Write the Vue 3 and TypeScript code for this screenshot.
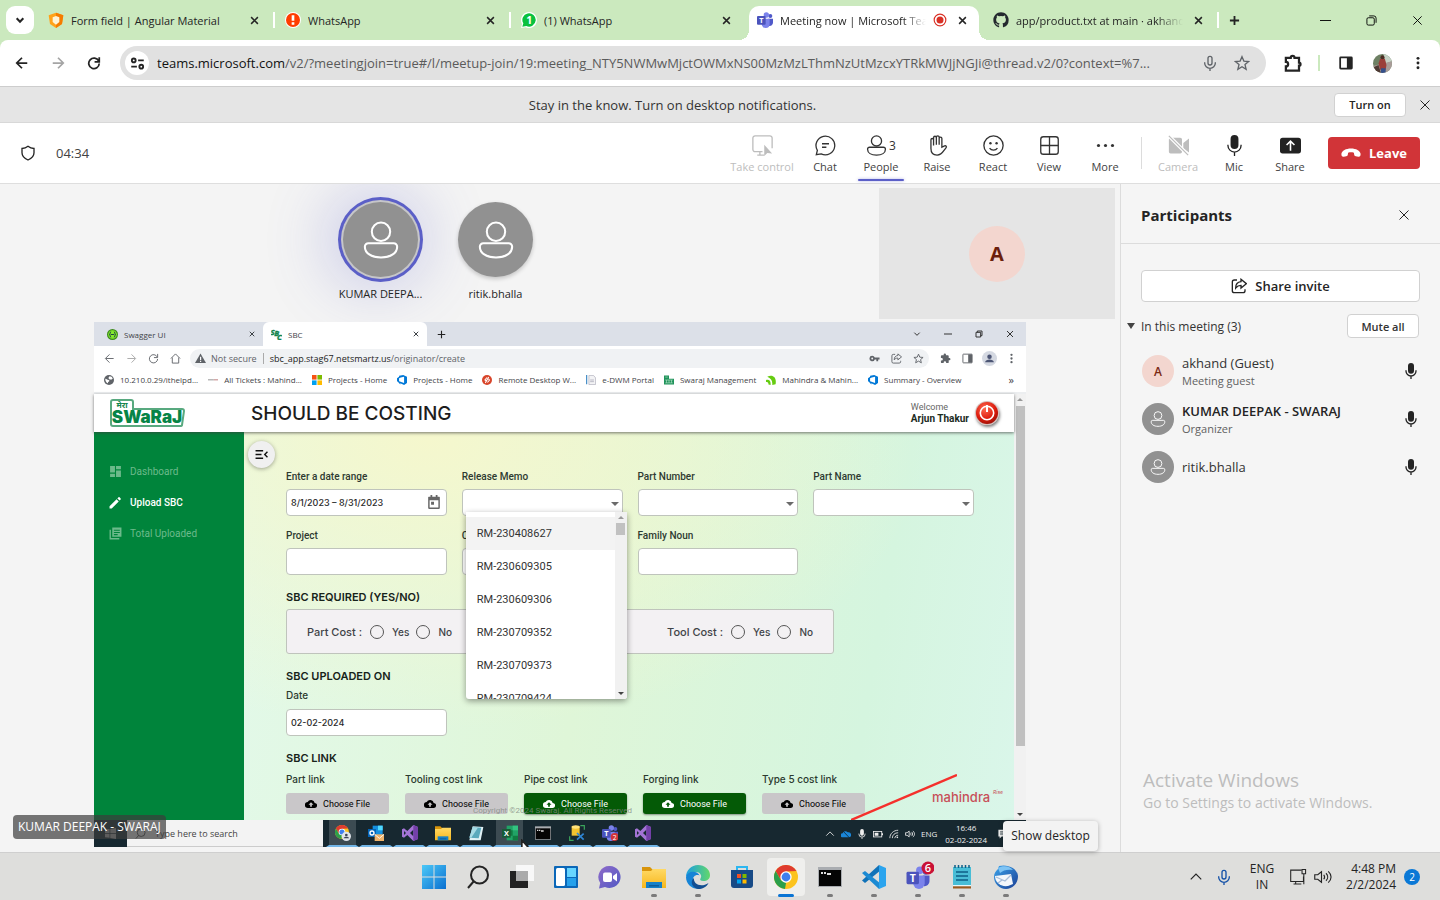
<script setup lang="ts">
import { ref } from 'vue'

interface Tab { icon: string; title: string; active?: boolean; faded?: boolean }
interface Tool { icon: string; label: string; disabled?: boolean; active?: boolean; count?: number }
interface Person { name: string; role?: string; initial?: string; strong?: boolean }

const tabs: Tab[] = [
  { icon: 'angular', title: 'Form field | Angular Material' },
  { icon: 'alert', title: 'WhatsApp' },
  { icon: 'whatsapp', title: '(1) WhatsApp' },
  { icon: 'teams', title: 'Meeting now | Microsoft Teams', active: true, faded: true },
  { icon: 'github', title: 'app/product.txt at main · akhand', faded: true },
]

const meetingTools: Tool[] = [
  { icon: 'control', label: 'Take control', disabled: true },
  { icon: 'chat', label: 'Chat' },
  { icon: 'person', label: 'People', active: true, count: 3 },
  { icon: 'hand', label: 'Raise' },
  { icon: 'smile', label: 'React' },
  { icon: 'grid', label: 'View' },
  { icon: 'more', label: 'More' },
]
const deviceTools: Tool[] = [
  { icon: 'camera-off', label: 'Camera', disabled: true },
  { icon: 'mic-fill', label: 'Mic' },
  { icon: 'share-box', label: 'Share' },
]

const people: Person[] = [
  { name: 'akhand (Guest)', role: 'Meeting guest', initial: 'A' },
  { name: 'KUMAR DEEPAK - SWARAJ', role: 'Organizer', strong: true },
  { name: 'ritik.bhalla' },
]

const bookmarks = [
  { icon: 'globe', title: '10.210.0.29/ithelpd...' },
  { icon: 'dash', title: 'All Tickets : Mahind...' },
  { icon: 'microsoft', title: 'Projects - Home' },
  { icon: 'devops', title: 'Projects - Home' },
  { icon: 'remote', title: 'Remote Desktop W...' },
  { icon: 'doc', title: 'e-DWM Portal' },
  { icon: 'swaraj-mini', title: 'Swaraj Management' },
  { icon: 'leaf', title: 'Mahindra & Mahin...' },
  { icon: 'devops', title: 'Summary - Overview' },
]

const sideItems = [
  { icon: 'dashboard', title: 'Dashboard', active: false },
  { icon: 'pencil', title: 'Upload SBC', active: true },
  { icon: 'library', title: 'Total Uploaded', active: false },
]

const memos = ['RM-230408627', 'RM-230609305', 'RM-230609306', 'RM-230709352', 'RM-230709373', 'RM-230709424']
const links = [
  { title: 'Part link', ready: false },
  { title: 'Tooling cost link', ready: false },
  { title: 'Pipe cost link', ready: true },
  { title: 'Forging link', ready: true },
  { title: 'Type 5 cost link', ready: false },
]

const remoteApps = ['chrome-user', 'outlook', 'vs', 'folder', 'note-blue', 'excel', 'terminal', 'dbtool', 'teams-2', 'vs']
const apps = [
  { icon: 'windows', name: 'Start', open: false },
  { icon: 'search', name: 'Search', open: false },
  { icon: 'taskview', name: 'Task view', open: false },
  { icon: 'widgets', name: 'Widgets', open: false },
  { icon: 'meet', name: 'Chat', open: false },
  { icon: 'folder', name: 'File Explorer', open: true },
  { icon: 'edge', name: 'Edge', open: true },
  { icon: 'store', name: 'Store', open: false },
  { icon: 'chrome', name: 'Chrome', open: true },
  { icon: 'terminal', name: 'Command Prompt', open: true },
  { icon: 'vscode', name: 'Code', open: true },
  { icon: 'teams-6', name: 'Teams', open: true },
  { icon: 'notepad', name: 'Notepad', open: true },
  { icon: 'thunderbird', name: 'Thunderbird', open: true },
]

const dateRange = ref('8/1/2023 – 8/31/2023')
const uploadedOn = ref('02-02-2024')
const costs = ['Part Cost :', 'Tool Cost :']
</script>

<template>
  <div class="desktop">
    <svg class="paints" aria-hidden="true">
      <defs>
        <linearGradient id="gWin" x1="0" y1="0" x2="1" y2="1"><stop offset="0" stop-color="#4cc9f8" /><stop offset="1" stop-color="#0a6fd0" /></linearGradient>
        <linearGradient id="gEdge" x1="0" y1="0" x2="1" y2="0"><stop offset="0" stop-color="#1b9de2" /><stop offset="1" stop-color="#62d86a" /></linearGradient>
        <linearGradient id="gMeet" x1="0" y1="0" x2="1" y2="1"><stop offset="0" stop-color="#8f6bc9" /><stop offset="1" stop-color="#5159c4" /></linearGradient>
        <linearGradient id="gFold" x1="0" y1="0" x2="0" y2="1"><stop offset="0" stop-color="#ffd965" /><stop offset="1" stop-color="#f7b71d" /></linearGradient>
        <radialGradient id="gPower" cx=".4" cy=".3" r=".8"><stop offset="0" stop-color="#ff6b52" /><stop offset=".6" stop-color="#dd1b0c" /><stop offset="1" stop-color="#8c0d06" /></radialGradient>
        <linearGradient id="gBird" x1="0" y1="0" x2="1" y2="1"><stop offset="0" stop-color="#3ba4ec" /><stop offset="1" stop-color="#1c3f94" /></linearGradient>
        <clipPath id="faceClip"><circle cx="12" cy="12" r="12" /></clipPath>
      </defs>
    </svg>
    <svg class="sprite" aria-hidden="true">
      <symbol id="chev-down" viewBox="0 0 24 24"><path class="s" d="M4 8l8 8 8-8" /></symbol>
      <symbol id="chev-up" viewBox="0 0 24 24"><path class="s" d="M3 16l9-9 9 9" /></symbol>
      <symbol id="x" viewBox="0 0 24 24"><path class="s" d="M3 3l18 18M21 3L3 21" /></symbol>
      <symbol id="plus" viewBox="0 0 24 24"><path class="s" d="M12 2v20M2 12h20" /></symbol>
      <symbol id="minus" viewBox="0 0 24 24"><path class="s" d="M0 12h24" /></symbol>
      <symbol id="restore" viewBox="0 0 24 24"><rect class="s" x="2" y="6" width="16" height="16" rx="3" /><path class="s" d="M7 2h10a5 5 0 0 1 5 5v10" /></symbol>
      <symbol id="restore-sq" viewBox="0 0 24 24"><path class="s" d="M3 7h14v14H3zM7 7V3h14v14h-4" /></symbol>
      <symbol id="left" viewBox="0 0 24 24"><path class="s" d="M21 12H4M12 3l-9 9 9 9" /></symbol>
      <symbol id="right" viewBox="0 0 24 24"><path class="s" d="M3 12h17M12 3l9 9-9 9" /></symbol>
      <symbol id="reload" viewBox="0 0 24 24"><path class="s" d="M20 8.500A9 9 0 1 0 21 13M21 2v8h-8" /></symbol>
      <symbol id="home" viewBox="0 0 24 24"><path class="s" d="M2 12L12 2l10 10M5 10v12h14V10" /></symbol>
      <symbol id="tune" viewBox="0 0 24 24"><g class="s"><circle cx="6" cy="7" r="3" /><path d="M13 7h9M2 17h9" /><circle cx="18" cy="17" r="3" /></g></symbol>
      <symbol id="mic" viewBox="0 0 24 24"><path class="s" d="M9 5a3 3 0 0 1 6 0v7a3 3 0 0 1-6 0zM4 11v1a8 8 0 0 0 16 0v-1M12 20v4" /></symbol>
      <symbol id="star" viewBox="0 0 24 24"><path class="s" d="M12 2.500l2.800 6.600 7.200.6-5.500 4.700 1.700 7-6.200-3.700-6.200 3.700 1.700-7L2 9.700l7.200-.6z" /></symbol>
      <symbol id="puzzle" viewBox="0 0 24 24"><path class="s" d="M2.500 5h6.500a2.500 2.500 0 0 1 5 0h6v6.500a2 2 0 0 1 0 4V22H2.500v-5.500a3 3 0 0 0 0-6z" /></symbol>
      <symbol id="puzzle-fill" viewBox="0 0 24 24"><path d="M20 11h-1V7a2 2 0 0 0-2-2h-4V3.500a2.500 2.500 0 0 0-5 0V5H4a2 2 0 0 0-2 2v4h1.500a2.700 2.700 0 0 1 0 5.400H2V20a2 2 0 0 0 2 2h4v-1.500a2.700 2.700 0 0 1 5.400 0V22H17a2 2 0 0 0 2-2v-4h1.500a2.500 2.500 0 0 0-.5-5z" /></symbol>
      <symbol id="panel" viewBox="0 0 24 24"><rect class="s" x="2" y="2.500" width="20" height="19" rx="1" /><path d="M13.500 3H22v18h-8.500z" /></symbol>
      <symbol id="vdots" viewBox="0 0 24 24"><circle cx="12" cy="4" r="2.500" /><circle cx="12" cy="12" r="2.500" /><circle cx="12" cy="20" r="2.500" /></symbol>
      <symbol id="more" viewBox="0 0 24 24"><circle cx="4" cy="12" r="1.800" /><circle cx="12" cy="12" r="1.800" /><circle cx="20" cy="12" r="1.800" /></symbol>
      <symbol id="angular" viewBox="0 0 24 24"><path fill="#ffa21a" d="M12 1l11 4-2 13-9 6-9-6L1 5z" /><path fill="#f57c00" d="M12 1l11 4-2 13-9 6z" /><path fill="#fff3d6" d="M7 8l5-2 5 2v7l-5 4-5-4z" /></symbol>
      <symbol id="alert" viewBox="0 0 24 24"><circle cx="12" cy="12" r="12" fill="#fff" /><circle cx="12" cy="12" r="10.500" fill="#ff3d00" /><path fill="#fff" d="M10 5h4v8h-4zM10 15.500h4V19h-4z" /></symbol>
      <symbol id="whatsapp" viewBox="0 0 24 24"><path fill="#fff" d="M0 24l1.500-6A12 12 0 1 1 7 23z" /><path fill="#0ac13e" d="M2 22l1.500-5A10 10 0 1 1 8 21z" /><text x="12.500" y="18" text-anchor="middle" font-size="16" font-weight="700" fill="#fff">1</text></symbol>
      <symbol id="teams" viewBox="0 0 24 24"><circle cx="20" cy="6" r="3" fill="#5059c9" /><circle cx="14" cy="4.500" r="4" fill="#7b83eb" /><path fill="#5059c9" d="M17 10h7v6a5 5 0 0 1-6 5z" /><path fill="#7b83eb" d="M7 10h12v8a6 6 0 0 1-12 0z" /><rect y="6" width="13" height="13" rx="1.500" fill="#4b53bc" /><text x="6.500" y="16.500" text-anchor="middle" font-size="11" font-weight="700" fill="#fff">T</text></symbol>
      <symbol id="github" viewBox="0 0 24 24"><path d="M12 .5C5.650.5.5 5.650.5 12c0 5.080 3.290 9.390 7.860 10.910.58.110.79-.25.79-.55v-2.120c-3.200.7-3.870-1.360-3.870-1.360-.52-1.330-1.280-1.680-1.280-1.680-1.050-.71.08-.7.08-.7 1.160.08 1.770 1.190 1.770 1.190 1.030 1.760 2.700 1.250 3.360.96.1-.75.4-1.250.73-1.540-2.550-.29-5.240-1.280-5.240-5.680 0-1.250.45-2.280 1.180-3.080-.12-.29-.51-1.460.11-3.040 0 0 .97-.31 3.160 1.180a10.900 10.900 0 0 1 5.760 0c2.200-1.490 3.160-1.180 3.160-1.180.63 1.580.24 2.750.12 3.040.74.8 1.180 1.830 1.180 3.080 0 4.410-2.690 5.380-5.250 5.670.41.36.78 1.060.78 2.130v3.160c0 .31.21.67.8.55A11.500 11.500 0 0 0 23.500 12C23.500 5.650 18.350.5 12 .5z" /></symbol>
      <symbol id="record" viewBox="0 0 24 24"><circle cx="12" cy="12" r="10" fill="none" stroke="#d93025" stroke-width="2" /><circle cx="12" cy="12" r="6" fill="#d93025" /></symbol>
      <symbol id="face" viewBox="0 0 24 24"><g clip-path="url(#faceClip)"><path fill="#6e8064" d="M0 0h24v24H0z" /><path fill="#c6d2c6" d="M13 0h11v9l-8 3z" /><path fill="#a99c98" d="M0 15l24-6v15H0z" /><path fill="#4d3a34" d="M0 17l7-3 3 10H0z" /><path fill="#9b3f3a" d="M9 6h6l2 8-1 6H9L7 12z" /><circle cx="12" cy="4" r="2.500" fill="#4a2c22" /><path fill="#34508a" d="M10 18h6v6h-6z" /></g></symbol>
      <symbol id="shield" viewBox="0 0 24 24"><path class="s" d="M12 2c3 2.500 6 3.300 9 3.300v6.200c0 5-3.500 8.500-9 11-5.500-2.500-9-6-9-11V5.300C6 5.300 9 4.500 12 2z" /></symbol>
      <symbol id="control" viewBox="0 0 24 24"><path class="s" d="M12 19H3.500A2.500 2.500 0 0 1 1 16.500v-13A2.500 2.500 0 0 1 3.500 1h17A2.500 2.500 0 0 1 23 3.500V15M9 19v4M6 23h8" /><path d="M14 11v13l3.500-3.500L23 21z" /></symbol>
      <symbol id="chat" viewBox="0 0 24 24"><path class="s" d="M1.500 22.500l1.200-5A10.700 10.700 0 1 1 7 21.500zM8 10h8M8 14h5" /></symbol>
      <symbol id="person" viewBox="0 0 24 24"><circle class="s" cx="12" cy="6.800" r="5.800" /><path class="s" d="M4 14h16a2.200 2.200 0 0 1 2.200 2.200c0 4-4 6.800-10.200 6.800S1.800 20.200 1.800 16.200A2.200 2.200 0 0 1 4 14z" /></symbol>
      <symbol id="hand" viewBox="0 0 24 24"><path class="s" d="M4.500 13V5.500a1.500 1.500 0 0 1 3 0V12 3a1.500 1.500 0 0 1 3.200 0V11 2.500a1.500 1.500 0 0 1 3.200 0V11 4a1.500 1.500 0 0 1 3.100 0v10l3-1.500c1.500-.8 3 .8 1.700 2.200C19 17.500 17.500 23 11.500 23c-5 0-7-3.500-7-7.500z" /></symbol>
      <symbol id="smile" viewBox="0 0 24 24"><circle class="s" cx="12" cy="12" r="11" /><circle cx="8.500" cy="9.500" r="1.400" /><circle cx="15.500" cy="9.500" r="1.400" /><path class="s" d="M7.500 15a5.500 5.500 0 0 0 9 0" /></symbol>
      <symbol id="grid" viewBox="0 0 24 24"><rect class="s" x="2" y="2" width="20" height="20" rx="3" /><path class="s" d="M12 2v20M2 12h20" /></symbol>
      <symbol id="camera-off" viewBox="0 0 24 24"><path d="M3 3h11a2 2 0 0 1 2 2v14a2 2 0 0 1-2 2H3a2 2 0 0 1-2-2V5a2 2 0 0 1 2-2zM17.500 9L24 4v16l-6.500-5z" /><path stroke="#fff" stroke-width="4" d="M1 1l22 22" /><path class="s" d="M1 1l22 22" /></symbol>
      <symbol id="mic-fill" viewBox="0 0 24 24"><rect x="7.500" y="0" width="9" height="16" rx="4.500" /><path class="s" d="M4.500 11v1a7.500 7.500 0 0 0 15 0v-1M12 20v4" /></symbol>
      <symbol id="share-box" viewBox="0 0 24 24"><rect x="0" y="3" width="24" height="18" rx="3" /><path fill="none" stroke="#fff" stroke-width="1.800" d="M12 18V7M7.500 11.500L12 7l4.500 4.500" /></symbol>
      <symbol id="phone" viewBox="0 0 24 24"><path d="M12 6.500c6 0 11 2.500 11.500 6.500.2 2.500-.8 3.800-2.800 3.500l-3-.6c-1.200-.3-1.700-1-1.900-2.200l-.3-2c-2.300-.7-4.700-.7-7 0l-.3 2c-.2 1.200-.7 1.900-1.900 2.200l-3 .6c-2 .3-3-1-2.800-3.500C1 9 6 6.500 12 6.500z" /></symbol>
      <symbol id="share-arrow" viewBox="0 0 24 24"><path class="s" d="M9 3H5a3 3 0 0 0-3 3v13a3 3 0 0 0 3 3h13a3 3 0 0 0 3-3v-2M15 2l8 6.500-8 6.500v-4c-4 0-6 1.500-8 4 0-6 3-9 8-9.500z" /></symbol>
      <symbol id="globe" viewBox="0 0 24 24"><circle cx="12" cy="12" r="12" fill="#5f6368" /><path fill="#fff" d="M3 9c4 0 5 3 8 3s2 4 0 4-1 4-2 4c-3-1-6-5-6-11zM13 3c4 0 7 2 8 6-2 0-3 3-5 2s-5-1-5-4 2-2 2-4z" /></symbol>
      <symbol id="dash" viewBox="0 0 24 24"><path fill="#aaa" d="M0 10h14v3H0z" /><path fill="#c99" d="M14 10h10v3H14z" /></symbol>
      <symbol id="microsoft" viewBox="0 0 24 24"><path fill="#f65314" d="M0 0h11v11H0z" /><path fill="#7cbb00" d="M13 0h11v11H13z" /><path fill="#00a1f1" d="M0 13h11v11H0z" /><path fill="#ffbb00" d="M13 13h11v11H13z" /></symbol>
      <symbol id="devops" viewBox="0 0 24 24"><path fill="#0078d7" fill-rule="evenodd" d="M0 8l5-4V2l10-2 9 4v15l-7 5-9-4v3l-6-7-2-1zM5 8v7l12 4V4L9 6z" /></symbol>
      <symbol id="remote" viewBox="0 0 24 24"><circle cx="12" cy="12" r="12" fill="#d8452a" /><path fill="none" stroke="#fff" stroke-width="2.500" d="M12 6l-5 6 4 4M14 8l4 4-5 6M16 5L8 19" /></symbol>
      <symbol id="doc" viewBox="0 0 24 24"><path fill="#4a90c8" d="M0 0h3v22H0z" /><path fill="#f3f3f5" stroke="#b9b9c4" d="M7 1h11l5 6v16H7z" /><path stroke="#99a" stroke-width="1.500" d="M10 12h9M10 16h9" /></symbol>
      <symbol id="swaraj-mini" viewBox="0 0 24 24"><path fill="#20935b" d="M0 1h12v8h12v14H0z" /><path stroke="#b7e3ca" stroke-width="1.500" d="M3 5h6M3 12h18M3 19h18M6 12v7M12 12v7M18 12v7" /></symbol>
      <symbol id="leaf" viewBox="0 0 24 24"><path fill="#6c1" d="M3 4C17-2 26 6 23 22l-8 2C16 13 12 8 3 4zM0 12c8-2 12 2 11 12l-5-1c0-5-2-6-6-6z" /></symbol>
      <symbol id="swagger" viewBox="0 0 24 24"><circle cx="12" cy="12" r="12" fill="#3d8a1c" /><circle cx="12" cy="12" r="9.500" fill="#85ea2d" /><path fill="none" stroke="#173647" stroke-width="2" d="M9 6c-3 0-1 5-4 6 3 1 1 6 4 6M15 6c3 0 1 5 4 6-3 1-1 6-4 6M8 12h8" /></symbol>
      <symbol id="sbc" viewBox="0 0 24 24"><g fill="#12854d" stroke="#12854d" stroke-width="1" font-weight="700" font-style="italic"><text x="-1" y="14" font-size="17">S</text><text x="7" y="16" font-size="17">B</text><text x="13" y="24" font-size="17">C</text></g></symbol>
      <symbol id="warn" viewBox="0 0 24 24"><path d="M12 1l12 21H0z" /><path fill="#fff" d="M11 8h2.500v7H11zM11 17h2.500v2.500H11z" /></symbol>
      <symbol id="key" viewBox="0 0 24 24"><path fill-rule="evenodd" d="M7 6a6 6 0 1 0 5.600 8H16v4h4v-4h3v-4H12.600A6 6 0 0 0 7 6zm0 4a2 2 0 1 1 0 4 2 2 0 0 1 0-4z" /></symbol>
      <symbol id="user" viewBox="0 0 24 24"><circle cx="12" cy="12" r="12" fill="#d5d9e2" /><circle cx="12" cy="9" r="3.600" fill="#4c5574" /><path fill="#4c5574" d="M5 18c0-3 4-4.500 7-4.500s7 1.500 7 4.500z" /></symbol>
      <symbol id="dashboard" viewBox="0 0 24 24"><path d="M2 2h9v12H2zM2 16h9v6H2zM13 2h9v6h-9zM13 10h9v12h-9z" /></symbol>
      <symbol id="pencil" viewBox="0 0 24 24"><path d="M1 19v4h4L18 10l-4-4zM21.500 6.500a1.500 1.500 0 0 0 0-2l-2-2a1.500 1.500 0 0 0-2 0L15.500 4.500l4 4z" /></symbol>
      <symbol id="library" viewBox="0 0 24 24"><path fill-rule="evenodd" d="M6 1h17v17H6zM9 5h11v2H9zM9 9h11v2H9zM9 13h7v2H9zM1 5h2.500v15.500H19V23H1z" /></symbol>
      <symbol id="menu-open" viewBox="0 0 24 24"><path fill="none" stroke="#111" stroke-width="2.600" d="M1 5h14M1 12h11M1 19h14M23 7l-5 5 5 5" /></symbol>
      <symbol id="calendar" viewBox="0 0 24 24"><path fill-rule="evenodd" d="M3 3h3V0h3v3h6V0h3v3h3a1 1 0 0 1 1 1v18a2 2 0 0 1-2 2H4a2 2 0 0 1-2-2V4a1 1 0 0 1 1-1zm1.500 6v12.500h15V9zM7 11.500h5v5H7z" /></symbol>
      <symbol id="cloud" viewBox="0 0 24 24"><path d="M19.400 10A7.500 7.500 0 0 0 5.300 8 6 6 0 0 0 6 20h13a5 5 0 0 0 .4-10z" /><path class="cut" d="M12 8.500l-5 5h3.300v4h3.400v-4H17z" /></symbol>
      <symbol id="power" viewBox="0 0 24 24"><circle cx="12" cy="12" r="12" fill="#d4bcb8" /><circle cx="12" cy="12" r="11" fill="url(#gPower)" /><circle cx="12" cy="12" r="6.700" fill="none" stroke="#fff" stroke-width="1.600" /><path stroke="#fff" stroke-width="2" d="M12 4v7" /></symbol>
      <symbol id="windows" viewBox="0 0 24 24"><path fill="url(#gWin)" d="M0 0h11.500v11.500H0zM12.500 0H24v11.500H12.500zM0 12.500h11.500V24H0zM12.500 12.500H24V24H12.500z" /></symbol>
      <symbol id="winlogo" viewBox="0 0 24 24"><path fill="#aaa" d="M0 3l10-1v9H0zM11.500 2L24 0v11H11.500zM0 12.500h10v9L0 20zM11.500 12.500H24V24l-12.500-2z" /></symbol>
      <symbol id="search" viewBox="0 0 24 24"><circle class="s" cx="13.500" cy="10" r="8.500" /><path class="s" d="M8 16l-6 7" /></symbol>
      <symbol id="taskview" viewBox="0 0 24 24"><path fill="#f8f8f8" d="M6 0h18v16H6z" /><path fill="#222" d="M0 6h18v17H0z" /><path fill="#aaa" d="M6 6h12v10H6z" /></symbol>
      <symbol id="widgets" viewBox="0 0 24 24"><rect y="1" width="24" height="22" rx="1" fill="#0b67b8" /><rect x="2" y="3" width="9" height="18" rx="1.500" fill="#fff" /><path fill="#67d5ff" d="M13 3h9v9h-9z" /><path fill="#25a1ec" d="M13 13h9v8h-9z" /></symbol>
      <symbol id="meet" viewBox="0 0 24 24"><path fill="url(#gMeet)" d="M12 1a11 11 0 1 1-5 21l-6 1.500 1.200-5.500A11 11 0 0 1 12 1z" /><rect x="5" y="7.500" width="9" height="9.500" rx="2" fill="#fff" /><path fill="#fff" d="M15 11l4-3v8.500l-4-3z" /></symbol>
      <symbol id="folder" viewBox="0 0 24 24"><path fill="#d8940b" d="M0 2h8l3 3v6H0z" /><path fill="url(#gFold)" d="M0 6h9l2-2h13v19H0z" /><path fill="#1580c8" d="M4 17h16v6H4z" /><path fill="#0c5c9b" d="M7 20h10v1.500H7z" /></symbol>
      <symbol id="edge" viewBox="0 0 24 24"><path fill="url(#gEdge)" d="M0 12C0 5 5.500 0 12 0s12 4.500 12 10c0 4-3 6-6.500 6-3 0-4-1.500-3-2.500 2-3-.5-6.500-4.500-6.500C5 7 1 10 0 12z" /><path fill="#1684d6" d="M0 12c1-4 5-6 9-5 2.500.5 4 2 4.500 3.500-4-1.500-6.500 1.500-6.500 4 0 5 5 8.500 10 7.500C10 27 0 21 0 12z" /><path fill="#124e91" d="M8 13c-1 6 7 10 14.500 5-2 4-6 6-10.500 6C7 23 3 17 8 13z" /></symbol>
      <symbol id="store" viewBox="0 0 24 24"><path fill="none" stroke="#2cb6f0" stroke-width="2" d="M7 6V2h10v4" /><path fill="#174a86" d="M1 5h22v15a3 3 0 0 1-3 3H4a3 3 0 0 1-3-3z" /><path fill="#f25022" d="M7 9h4v4H7z" /><path fill="#7fba00" d="M12.500 9h4v4h-4z" /><path fill="#00a4ef" d="M7 14.500h4v4H7z" /><path fill="#ffb900" d="M12.500 14.500h4v4h-4z" /></symbol>
      <symbol id="chrome" viewBox="0 0 24 24"><circle cx="12" cy="12" r="12" fill="#fcc31e" /><path fill="#df3b2f" d="M1.600 6A12 12 0 0 1 22.400 6L12 6.500 6.800 15z" /><path fill="#2b9f4b" d="M1.600 6l5.200 9 5.200 3-1 6A12 12 0 0 1 1.600 6z" /><circle cx="12" cy="12" r="5.700" fill="#fff" /><circle cx="12" cy="12" r="4.400" fill="#3f7fee" /></symbol>
      <symbol id="chrome-user" viewBox="0 0 24 24"><use href="#chrome" width="21" height="21" /><circle cx="17" cy="17" r="7" fill="#dfe4ea" /><circle cx="17" cy="15" r="2" fill="#3c4257" /><path fill="#3c4257" d="M13 20c0-3 8-3 8 0z" /></symbol>
      <symbol id="outlook" viewBox="0 0 24 24"><path fill="#1490df" d="M7 1h15v15H7z" /><path fill="#50d9ff" d="M15 1h7v7h-7z" /><rect y="6" width="12" height="12" fill="#0364b8" /><circle cx="6" cy="12" r="3" fill="none" stroke="#fff" stroke-width="2" /><path fill="#f0b36a" d="M10 14h14v10H10z" /><path fill="none" stroke="#fff" stroke-width="1.300" d="M10 14l7 6 7-6" /></symbol>
      <symbol id="vs" viewBox="0 0 24 24"><path fill="#a374d5" fill-rule="evenodd" d="M17 0l7 3v18l-7 3L8 15l-5 4-3-1.500v-11L3 5l5 4zM17 7l-5 5 5 5zM3 9v6l3-3z" /><path fill="#7440a9" d="M17 0l7 3v18l-7 3z" /></symbol>
      <symbol id="note-blue" viewBox="0 0 24 24"><path fill="#dff1f5" d="M7 2l16 1-4 20H2z" /><path fill="#5aa9bc" d="M7 3l13 1-4 16-14-1z" /><path fill="#a8dbe5" d="M7 3l8 .6L5 19l-3-.4z" /></symbol>
      <symbol id="excel" viewBox="0 0 24 24"><path fill="#21a366" d="M7 1h17v22H7z" /><path fill="#33c481" d="M16 1h8v7h-8z" /><path fill="#107c41" d="M7 8h9v8H7zM16 16h8v7h-8z" /><rect y="6" width="13" height="13" fill="#185c37" /><text x="6.500" y="16.500" text-anchor="middle" font-size="11" font-weight="700" fill="#fff">X</text></symbol>
      <symbol id="terminal" viewBox="0 0 24 24"><path fill="#a9acb0" d="M0 2h24v20H0z" /><path fill="#050505" d="M1 5h22v16H1z" /><path stroke="#ddd" d="M3 8h2M6 8h2M9 9h4" /></symbol>
      <symbol id="dbtool" viewBox="0 0 24 24"><path fill="none" stroke="#3ba45b" stroke-width="1.800" d="M1 17v6h6M17 1h6v6" /><path fill="#f2c230" d="M4 2h12v14H4z" /><ellipse cx="10" cy="3" rx="6" ry="2.500" fill="#ffe27a" /><path stroke="#2f86d6" stroke-width="2.500" d="M12 12l10 10M22 13L12 22" /></symbol>
      <symbol id="teams-2" viewBox="0 0 24 24"><use href="#teams" width="24" height="24" /><circle cx="19" cy="18" r="6" fill="#d13438" /><text x="19" y="22" text-anchor="middle" font-size="10" fill="#fff">2</text></symbol>
      <symbol id="teams-6" viewBox="0 0 28 28"><use href="#teams" x="0" y="5" width="24" height="23" /><circle cx="22" cy="7" r="6.500" fill="#c91136" /><text x="22" y="11" text-anchor="middle" font-size="11" font-weight="600" fill="#fff">6</text></symbol>
      <symbol id="vscode" viewBox="0 0 24 24"><path fill="#1072b8" d="M17 0l2 5L3 18l-3-2.500z" /><path fill="#1b8ad3" d="M0 8l3-2 16 13-2 5z" /><path fill="#2ba4ee" d="M17 0l7 3v18l-7 3z" /></symbol>
      <symbol id="notepad" viewBox="0 0 24 24"><rect x="3" y="2" width="18" height="19" fill="#49bdd6" /><path fill="#9c5a1f" d="M3 21h18v2.500H3z" /><path fill="#e8f6f9" d="M3 20h18v1.300H3z" /><path stroke="#0e5f86" stroke-width="1.500" d="M6 7h12M6 11h12M6 15h12M5 0v3M8.500 0v3M12 0v3M15.500 0v3M19 0v3" /></symbol>
      <symbol id="thunderbird" viewBox="0 0 24 24"><path fill="url(#gBird)" d="M5 1c7-2 18 1 19 10 0 8-6 13-12 13C5 24 0 18 0 12c0-4 2-6 4-8z" /><path fill="#7fc4f4" d="M4 3c5-3 12-2 15 2-5-1-10 0-13 3z" /><path fill="#f4f7fb" d="M1 11l16-2 2 10-5 2C6 22 1 17 1 11z" /><path fill="none" stroke="#a9bdd8" stroke-width="1.300" d="M2 12l9 4 6-6M8 15l-4 3" /></symbol>
      <symbol id="monitor" viewBox="0 0 24 24"><path class="s" d="M16 3H1v16h18v-7M8 19v3M5 22.500h11M17 2h5v6h-5zM19.500 8v15" /></symbol>
      <symbol id="speaker" viewBox="0 0 24 24"><path class="s" d="M1 9v6h4l5 4V5L5 9zM13 9c1.500 2 1.500 4 0 6M16 7c3 3 3 7 0 10M19 4.500c5 4.500 5 10.500 0 15" /></symbol>
      <symbol id="onedrive" viewBox="0 0 24 24"><path fill="#1a86d9" d="M4 20a5 5 0 0 1 0-10 7 7 0 0 1 12-2 6 6 0 0 1 4 12z" /><path stroke="#0f2530" stroke-width="2" d="M3 3l18 19" /></symbol>
      <symbol id="battery" viewBox="0 0 24 24"><rect class="s" x="1" y="6" width="20" height="13" /><path d="M4 9h9v7H4zM21 10h3v5h-3z" /></symbol>
      <symbol id="wifi" viewBox="0 0 24 24"><path class="s" d="M2 22C2 11 11 3 22 3M8 22C8 14 14 9 22 9M14 22c0-4 4-7 8-7" /><circle cx="20" cy="20" r="2" /></symbol>
      <symbol id="note" viewBox="0 0 24 24"><path d="M1 2h22v16H9l-5 5v-5H1z" /><path stroke="#15262f" stroke-width="2" d="M5 7h14M5 12h14" /></symbol>
    </svg>

    <header class="tab-strip">
      <button class="tab-search" aria-label="Search tabs"><svg><use href="#chev-down" /></svg></button>
      <div v-for="(t, i) in tabs" :key="i" class="tab" :class="{ active: t.active }">
        <svg class="fav"><use :href="'#' + t.icon" /></svg>
        <span class="tab-title" :class="{ faded: t.faded }">{{ t.title }}</span>
        <svg v-if="t.active" class="rec"><use href="#record" /></svg>
        <button class="tab-close" aria-label="Close tab"><svg><use href="#x" /></svg></button>
      </div>
      <button class="new-tab" aria-label="New tab"><svg><use href="#plus" /></svg></button>
      <div class="win-controls">
        <button aria-label="Minimize"><svg><use href="#minus" /></svg></button>
        <button aria-label="Restore"><svg><use href="#restore" /></svg></button>
        <button aria-label="Close"><svg><use href="#x" /></svg></button>
      </div>
    </header>

    <div class="toolbar-back">
      <nav class="toolbar">
        <button aria-label="Back"><svg><use href="#left" /></svg></button>
        <button aria-label="Forward" class="dim"><svg><use href="#right" /></svg></button>
        <button aria-label="Reload"><svg><use href="#reload" /></svg></button>
        <div class="omnibox">
          <button class="site" aria-label="Site information"><svg><use href="#tune" /></svg></button>
          <span class="url"><b>teams.microsoft.com</b>/v2/?meetingjoin=true#/l/meetup-join/19:meeting_NTY5NWMwMjctOWMxNS00MzMzLThmNzUtMzcxYTRkMWJjNGJi@thread.v2/0?context=%7...</span>
          <svg class="omni-icon"><use href="#mic" /></svg>
          <svg class="omni-icon"><use href="#star" /></svg>
        </div>
        <button aria-label="Extensions" class="big thin"><svg><use href="#puzzle" /></svg></button>
        <span class="bar-sep"></span>
        <button aria-label="Side panel"><svg><use href="#panel" /></svg></button>
        <button aria-label="Profile" class="big"><svg><use href="#face" /></svg></button>
        <button aria-label="Menu"><svg><use href="#vdots" /></svg></button>
      </nav>
    </div>

    <div class="notice">
      <span class="notice-text">Stay in the know. Turn on desktop notifications.</span>
      <button class="outline small">Turn on</button>
      <button class="plain" aria-label="Dismiss"><svg><use href="#x" /></svg></button>
    </div>

    <div class="meeting-bar">
      <svg class="shield"><use href="#shield" /></svg>
      <span class="timer">04:34</span>
      <div class="tools">
        <button v-for="t in meetingTools" :key="t.label" class="tool" :class="{ active: t.active, wide: t.icon === 'control' }" :disabled="t.disabled">
          <span class="tool-icon"><svg><use :href="'#' + t.icon" /></svg><span v-if="t.count" class="count">{{ t.count }}</span></span>
          <span>{{ t.label }}</span>
        </button>
        <span class="tools-sep"></span>
        <button v-for="t in deviceTools" :key="t.label" class="tool" :disabled="t.disabled">
          <span class="tool-icon solid"><svg><use :href="'#' + t.icon" /></svg></span>
          <span>{{ t.label }}</span>
        </button>
        <button class="leave"><svg><use href="#phone" /></svg>Leave</button>
      </div>
    </div>

    <main class="meeting">
      <section class="stage">
        <div class="strip">
          <div class="speakers">
            <figure class="speaker talking"><span class="disc"><svg><use href="#person" /></svg></span><figcaption>KUMAR DEEPA...</figcaption></figure>
            <figure class="speaker"><span class="disc"><svg><use href="#person" /></svg></span><figcaption>ritik.bhalla</figcaption></figure>
          </div>
          <div class="self-view"><span class="initial">A</span></div>
        </div>

        <div class="shared">
          <div class="r-tabs">
            <div class="r-tab"><svg class="r-fav"><use href="#swagger" /></svg><span>Swagger UI</span><svg class="r-x"><use href="#x" /></svg></div>
            <div class="r-tab on"><svg class="r-fav"><use href="#sbc" /></svg><span>SBC</span><svg class="r-x"><use href="#x" /></svg></div>
            <svg class="r-plus"><use href="#plus" /></svg>
            <div class="r-win">
              <svg><use href="#chev-down" /></svg><svg><use href="#minus" /></svg><svg><use href="#restore-sq" /></svg><svg><use href="#x" /></svg>
            </div>
          </div>
          <div class="r-toolbar">
            <svg><use href="#left" /></svg><svg class="dim"><use href="#right" /></svg><svg><use href="#reload" /></svg><svg><use href="#home" /></svg>
            <div class="r-omni">
              <svg><use href="#warn" /></svg><span class="insecure">Not secure</span>
              <span class="r-url"><b>sbc_app.stag67.netsmartz.us</b>/originator/create</span>
              <svg><use href="#key" /></svg><svg><use href="#share-arrow" /></svg><svg><use href="#star" /></svg>
            </div>
            <svg><use href="#puzzle-fill" /></svg><svg><use href="#panel" /></svg><svg class="r-user"><use href="#user" /></svg><svg class="r-dots"><use href="#vdots" /></svg>
          </div>
          <div class="r-bookmarks">
            <a v-for="(b, i) in bookmarks" :key="i" href="#"><svg><use :href="'#' + b.icon" /></svg>{{ b.title }}</a>
            <span class="overflow">»</span>
          </div>

          <div class="r-page">
            <div class="app">
              <div class="app-head">
                <svg class="logo" viewBox="0 0 75 28" role="img" aria-label="Swaraj">
                  <path d="M1 10V3q0-2 2-2h18q2 0 2 2v7h49q2 0 2 2l-2 14q0 1-2 1H3q-2 0-2-2z" fill="#fff" stroke="#58a97f" />
                  <text x="12" y="9" text-anchor="middle" class="logo-top">मेरा</text>
                  <text x="37" y="24" text-anchor="middle" class="logo-main">SWaRaJ</text>
                </svg>
                <h1>SHOULD BE COSTING</h1>
                <div class="who"><span>Welcome</span><strong>Arjun Thakur</strong></div>
                <button class="power" aria-label="Log out"><svg><use href="#power" /></svg></button>
              </div>
              <div class="app-body">
                <nav class="side">
                  <a v-for="s in sideItems" :key="s.title" href="#" :class="{ on: s.active }"><svg><use :href="'#' + s.icon" /></svg>{{ s.title }}</a>
                </nav>
                <form class="form" @submit.prevent>
                  <button type="button" class="fold" aria-label="Collapse menu"><svg><use href="#menu-open" /></svg></button>
                  <div class="fields">
                    <div class="field">
                      <label for="range">Enter a date range</label>
                      <div class="control"><input id="range" v-model="dateRange" /><svg class="cal"><use href="#calendar" /></svg></div>
                    </div>
                    <div class="field">
                      <label for="memo">Release Memo</label>
                      <div class="control caret"><select id="memo"></select>
                        <div class="menu">
                          <ul role="listbox" aria-label="Release Memo"><li v-for="(m, i) in memos" :key="m" role="option" :class="{ hot: i === 0 }">{{ m }}</li></ul>
                          <div class="menu-bar"><i class="up"></i><i class="thumb"></i><i class="down"></i></div>
                        </div>
                      </div>
                    </div>
                    <div class="field"><label for="pnum">Part Number</label><div class="control caret"><select id="pnum"></select></div></div>
                    <div class="field"><label for="pname">Part Name</label><div class="control caret"><select id="pname"></select></div></div>
                    <div class="field"><label for="project">Project</label><div class="control"><input id="project" /></div></div>
                    <div class="field"><label for="c">C</label><div class="control"><input id="c" /></div></div>
                    <div class="field"><label for="noun">Family Noun</label><div class="control"><input id="noun" /></div></div>
                  </div>
                  <h2>SBC REQUIRED (YES/NO)</h2>
                  <div class="costs">
                    <div v-for="c in costs" :key="c" class="cost" role="radiogroup" :aria-label="c">
                      <span class="cost-name">{{ c }}</span>
                      <label><input type="radio" :name="c" />Yes</label>
                      <label><input type="radio" :name="c" />No</label>
                    </div>
                  </div>
                  <h2>SBC UPLOADED ON</h2>
                  <label class="geo" for="up">Date</label>
                  <div class="control date"><input id="up" v-model="uploadedOn" /></div>
                  <h2>SBC LINK</h2>
                  <div class="links">
                    <div v-for="l in links" :key="l.title" class="link">
                      <span class="geo">{{ l.title }}</span>
                      <button type="button" :class="{ ready: l.ready }"><svg><use href="#cloud" /></svg>Choose File</button>
                    </div>
                  </div>
                  <small class="copy">Copyright ©2024 Swaraj. All Rights Reserved</small>
                  <svg class="swoosh" viewBox="0 0 106 46"><path d="M0 46L106 1" stroke="#f5302c" stroke-width="2.500" /></svg>
                  <svg class="brand" viewBox="0 0 74 16" role="img" aria-label="mahindra Rise"><text x="0" y="14" class="brand-main">mahindra</text><text x="61" y="6" class="brand-rise">Rise</text></svg>
                </form>
              </div>
            </div>
            <div class="r-scroll"><i class="up"></i><i class="thumb"></i><i class="down"></i></div>
          </div>

          <div class="r-task">
            <span class="r-start"><svg><use href="#winlogo" /></svg></span>
            <span class="r-search"><svg><use href="#search" /></svg>Type here to search</span>
            <div class="r-apps"><span v-for="(a, i) in remoteApps" :key="i" :class="{ lit: i === 0 || i === 5 }"><svg><use :href="'#' + a" /></svg></span></div>
            <div class="r-tray">
              <svg><use href="#chev-up" /></svg><svg><use href="#onedrive" /></svg><svg><use href="#mic-fill" /></svg><svg><use href="#battery" /></svg><svg><use href="#wifi" /></svg><svg><use href="#speaker" /></svg>
              <span>ENG</span><span class="r-clock">16:46<br />02-02-2024</span><svg class="r-note"><use href="#note" /></svg>
            </div>
            <svg class="cursor" viewBox="0 0 12 16"><path d="M1 1v13l3-3 2 5 2-1-2-4h4z" fill="#fff" stroke="#222" /></svg>
          </div>
        </div>
        <span class="name-tag">KUMAR DEEPAK - SWARAJ</span>
      </section>

      <aside class="panel">
        <div class="panel-head"><h2>Participants</h2><button class="plain" aria-label="Close panel"><svg><use href="#x" /></svg></button></div>
        <div class="panel-body">
          <button class="outline invite"><svg><use href="#share-arrow" /></svg>Share invite</button>
          <div class="group"><i class="tri"></i><span>In this meeting (3)</span><button class="outline small mute">Mute all</button></div>
          <ul class="people">
            <li v-for="p in people" :key="p.name">
              <span class="avatar" :class="{ guest: p.initial }"><template v-if="p.initial">{{ p.initial }}</template><svg v-else><use href="#person" /></svg></span>
              <span class="who-text"><span class="p-name" :class="{ strong: p.strong }">{{ p.name }}</span><span v-if="p.role" class="p-role">{{ p.role }}</span></span>
              <svg class="p-mic"><use href="#mic-fill" /></svg>
            </li>
          </ul>
          <div class="activate"><p class="a1">Activate Windows</p><p class="a2">Go to Settings to activate Windows.</p></div>
        </div>
      </aside>
      <div class="tooltip" role="tooltip">Show desktop</div>
    </main>

    <footer class="taskbar">
      <span></span>
      <div class="apps">
        <button v-for="a in apps" :key="a.name" :aria-label="a.name" :class="{ open: a.open, current: a.icon === 'chrome' }"><svg :class="a.icon"><use :href="'#' + a.icon" /></svg></button>
      </div>
      <div class="tray">
        <svg class="t-up"><use href="#chev-up" /></svg>
        <svg class="t-mic"><use href="#mic" /></svg>
        <span class="lang">ENG<br />IN</span>
        <svg class="t-mon"><use href="#monitor" /></svg>
        <svg class="t-spk"><use href="#speaker" /></svg>
        <span class="clock">4:48 PM<br />2/2/2024</span>
        <span class="badge">2</span>
      </div>
    </footer>
  </div>
</template>

<style>
html, body { margin: 0; height: 100%; }
#app { height: 100%; }
</style>

<style scoped>
* { box-sizing: border-box; }
.desktop { height: 100vh; min-height: 900px; display: flex; flex-direction: column; overflow: hidden; font-family: "Open Sans", "Noto Sans", sans-serif; font-size: 12px; color: #242424; background: #f4f4f4; }
svg { display: block; flex: none; width: 16px; height: 16px; fill: currentColor; stroke-width: 2; }
.paints { position: absolute; width: 0; height: 0; }
.sprite { display: none; }
.s { fill: none; stroke: currentColor; }
.cut { fill: var(--cut, #c9c9c9); }
button { border: 0; padding: 0; margin: 0; background: none; font: inherit; color: inherit; display: flex; align-items: center; justify-content: center; }
h1, h2, p, ul, figure { margin: 0; padding: 0; list-style: none; }
a { color: inherit; text-decoration: none; }

/* Browser window */
.tab-strip { height: 40px; flex: none; display: flex; align-items: center; background: #cbe9be; padding-left: 6px; }
.tab-search { width: 28px; height: 28px; border-radius: 9px; background: #fff; margin-right: 5px; }
.tab-search svg { width: 10px; height: 10px; stroke-width: 5; }
.tab { flex: 0 1 236px; min-width: 0; height: 16px; display: flex; align-items: center; padding: 0 11px 0 9px; border-right: 2px solid #fff; gap: 7px; position: relative; font-size: 11px; }
.tab:nth-child(n + 3) { padding-left: 10px; }
.tab:has(+ .active) { border-color: transparent; }
.tab.active { align-self: flex-end; height: 34px; flex-basis: 230px; margin: 0 4px 0 2px; padding: 0 9px 6px 8px; border: 0; background: #fff; border-radius: 10px 10px 0 0; }
.tab.active::before, .tab.active::after { content: ""; position: absolute; bottom: 0; width: 10px; height: 10px; }
.tab.active::before { left: -10px; background: radial-gradient(circle at 0 0, transparent 10px, #fff 10px); }
.tab.active::after { right: -10px; background: radial-gradient(circle at 100% 0, transparent 10px, #fff 10px); }
.fav { width: 16px; height: 16px; color: #24292f; }
.tab-title { flex: 1; min-width: 0; white-space: nowrap; overflow: hidden; }
.tab-title.faded { mask-image: linear-gradient(90deg, #000 84%, transparent); }
.rec { width: 14px; height: 14px; }
.tab-close { width: 16px; height: 16px; }
.tab-close svg { width: 9px; height: 9px; stroke-width: 4; }
.new-tab { width: 30px; }
.new-tab svg { width: 11px; height: 11px; stroke-width: 4; }
.win-controls { margin-left: auto; display: flex; }
.win-controls button { width: 46px; height: 40px; color: #000; }
.win-controls svg { width: 11px; height: 11px; stroke-width: 2; }
.toolbar-back { background: #cbe9be; flex: none; }
.toolbar { height: 46px; background: #fff; border-radius: 8px 8px 0 0; display: flex; align-items: center; padding: 0 8px; }
.toolbar > button { width: 28px; height: 28px; margin-right: 8px; }
.toolbar > button svg { width: 14px; height: 14px; stroke-width: 3; }
.toolbar > button.big svg { width: 19px; height: 19px; }
.toolbar > button.thin svg { width: 18px; height: 18px; }
.toolbar > button:last-child { margin: 0; }
.dim { color: #a5a5a5; }
.omnibox { flex: 1; min-width: 0; height: 34px; border-radius: 17px; background: #e1e1e1; margin: 0 13px 0 4px; padding: 0 16px 0 5px; display: flex; align-items: center; gap: 16px; }
.site { width: 24px; height: 24px; border-radius: 50%; background: #fff; margin-right: -8px; flex: none; }
.site svg { width: 15px; height: 15px; stroke-width: 3; }
.url { flex: 1; min-width: 0; font-size: 13px; color: #5b5b5b; white-space: nowrap; overflow: hidden; }
.url b { color: #111; font-weight: 400; }
.omni-icon { color: #5f6368; }
.bar-sep { width: 2px; height: 16px; background: #cbe9be; margin: 0 12px 0 3px; }
.notice { height: 37px; flex: none; display: flex; align-items: center; background: #e5e5e5; border-top: 1px solid #cdcdcd; border-bottom: 1px solid #d8d8d8; padding-right: 9px; gap: 13px; }
.notice-text { flex: 1; text-align: center; font-size: 13px; padding-left: 24px; color: #333; }
.outline { background: #fff; border: 1px solid #d1d1d1; border-radius: 4px; font-weight: 600; }
.small { width: 72px; height: 24px; font-size: 11px; }
.plain svg { width: 12px; height: 12px; stroke-width: 2; }

/* Meeting toolbar */
.meeting-bar { height: 61px; flex: none; background: #fff; display: flex; align-items: center; padding: 0 20px; border-bottom: 1px solid #dedede; position: relative; z-index: 1; }
.shield { width: 16px; height: 16px; stroke-width: 2; }
.timer { margin-left: 20px; font-size: 13px; color: #424242; }
.tools { margin-left: auto; display: flex; align-items: center; }
.tool { width: 56px; height: 60px; flex-direction: column; gap: 3px; padding-top: 3px; font-size: 11px; color: #424242; position: relative; }
.tool > span:last-child { line-height: 16px; }
.tool.wide { width: 70px; white-space: nowrap; }
.tool:disabled { color: #bdbdbd; }
.tool.active::after { content: ""; position: absolute; left: 5px; right: 5px; bottom: 2px; height: 2px; border-radius: 2px; background: #5b5fc7; box-shadow: 0 0 3px rgba(91, 95, 199, .5); }
.tool-icon { display: flex; align-items: center; gap: 2px; color: #333; }
.tool:disabled .tool-icon { color: #bdbdbd; }
.tool-icon svg { width: 21px; height: 21px; stroke-width: 1.5; }
.solid { color: #222; }
.count { font-size: 12px; }
.tools-sep { width: 1px; height: 32px; background: #dcdcdc; margin: 0 8px; }
.leave { width: 92px; height: 32px; margin-left: 10px; border-radius: 4px; background: #d13438; color: #fff; font-size: 13px; font-weight: 700; gap: 8px; }
.leave svg { width: 20px; height: 20px; }

/* Stage */
.meeting { flex: 1; min-height: 0; display: flex; position: relative; }
.stage { flex: 1; min-width: 0; display: flex; flex-direction: column; position: relative; padding-bottom: 5px; background: #f4f4f4; }
.strip { height: 138px; flex: none; display: flex; padding: 4px 5px 3px 0; overflow: hidden; }
.speakers { flex: 1; display: flex; justify-content: center; gap: 19px; padding: 14px 3px 0 0; }
.speaker { width: 96px; display: flex; flex-direction: column; align-items: center; }
.disc { width: 75px; height: 75px; border-radius: 50%; background: #919191; display: grid; place-items: center; color: #fff; box-shadow: 0 2px 4px rgba(0, 0, 0, .2); }
.disc svg { width: 38px; height: 38px; stroke-width: 1.3; }
.talking .disc { box-shadow: 0 0 0 2px #c6c6c9, 0 0 0 5px #5b5fc7, -4px 0 60px 14px rgba(91, 95, 199, .25); }
.speaker figcaption { font-size: 11px; line-height: 16px; margin-top: 9px; white-space: nowrap; }
.self-view { width: 236px; background: #e5e5e5; display: grid; place-items: center; }
.initial { width: 56px; height: 56px; border-radius: 50%; background: #f3d6cf; color: #6b1f0c; display: grid; place-items: center; font-size: 20px; font-weight: 700; }
.name-tag { position: absolute; left: 13px; bottom: 13px; height: 24px; border-radius: 4px; padding: 0 5px; line-height: 24px; background: rgba(60, 60, 60, .7); color: #fff; font-size: 12px; white-space: nowrap; }
.tooltip { position: absolute; right: 342px; bottom: 1px; width: 95px; height: 30px; line-height: 30px; border-radius: 4px; background: #f3f3f3; box-shadow: 0 1px 5px rgba(0, 0, 0, .3); text-align: center; z-index: 3; }

/* Shared screen */
.shared { flex: 1; min-height: 0; margin: 0 94px; display: flex; flex-direction: column; font-size: 8px; color: #3f4347; background: #fff; }
.shared svg { width: 11px; height: 11px; }
.r-tabs { height: 24px; flex: none; background: #dce0e8; display: flex; align-items: center; }
.r-tab { width: 169px; height: 24px; display: flex; align-items: center; padding: 0 8px 0 13px; gap: 6px; }
.r-tab span { flex: 1; }
.r-tab.on { width: 164px; background: #fff; border-radius: 6px 6px 0 0; padding-left: 8px; }
.r-tab .r-x { width: 6px; height: 6px; stroke-width: 4; }
.shared .r-plus { margin-left: 10px; width: 9px; height: 9px; stroke-width: 3; color: #222; }
.r-win { margin-left: auto; display: flex; gap: 23px; padding-right: 12px; color: #333; }
.shared .r-win svg { width: 8px; height: 8px; stroke-width: 3; }
.r-toolbar { height: 24px; flex: none; display: flex; align-items: center; gap: 11px; padding: 0 9px 0 10px; color: #5f6368; }
.r-toolbar svg { stroke-width: 2; }
.r-omni { flex: 1; height: 19px; border-radius: 10px; background: #f0f2f4; display: flex; align-items: center; padding: 0 5px; margin-left: -2px; gap: 11px; font-size: 9px; }
.insecure { margin-left: -6px; padding-right: 6px; border-right: 1px solid #aaa; line-height: 11px; }
.r-url { flex: 1; margin-left: -5px; }
.r-url b { font-weight: 400; color: #222; }
.r-toolbar .r-user { width: 15px; height: 15px; margin: 0 -2px; }
.r-bookmarks { height: 24px; flex: none; display: flex; align-items: center; gap: 10px; padding: 0 12px 3px 10px; border-bottom: 2px solid #eceef0; white-space: nowrap; }
.r-bookmarks a { display: flex; align-items: center; gap: 6px; }
.shared .r-bookmarks svg { width: 10px; height: 10px; }
.overflow { margin-left: auto; font-size: 11px; }
.r-page { flex: 1; min-height: 0; display: flex; }
.app { flex: 1; min-width: 0; display: flex; flex-direction: column; font-family: Roboto, sans-serif; }
.app-head { height: 38px; flex: none; display: flex; align-items: center; background: #fff; padding: 0 15px 0 16px; box-shadow: 0 1px 3px rgba(60, 60, 60, .7); position: relative; z-index: 1; }
.shared .logo { width: 75px; height: 28px; overflow: visible; }
.logo-top { font: 700 8px "Noto Sans Devanagari", "Noto Sans", sans-serif; fill: #12854d; }
.logo-main { font: 900 17px Inter, sans-serif; fill: #078447; }
h1 { font: 500 19px Inter, sans-serif; margin-left: 66px; color: #1d1d1d; }
.who { margin-left: auto; display: flex; flex-direction: column; font-size: 9px; line-height: 12px; color: #666; }
.who strong { color: #1b2b1e; font-weight: 700; font-size: 10px; }
.power { margin-left: 6px; border-radius: 50%; box-shadow: 1px 2px 3px rgba(0, 0, 0, .5); }
.shared .power svg { width: 24px; height: 24px; }
.app-body { flex: 1; min-height: 0; display: flex; }
.side { width: 150px; flex: none; background: #00843b; padding: 28px 15px; display: flex; flex-direction: column; gap: 9px; }
.side a { display: flex; align-items: center; gap: 8px; height: 22px; color: #6cba8b; font-size: 10px; }
.side a.on { color: #fff; font-weight: 500; }
.shared .side svg { width: 13px; height: 13px; }
.form { flex: 1; min-width: 0; position: relative; overflow: hidden; padding: 37px 40px 0 42px; background: radial-gradient(ellipse 65% 75% at 24% 2%, #f5f7cd 0, rgba(240, 248, 210, 0) 100%), linear-gradient(100deg, #e3f9ea 0, #dff6d8 45%, #d5f5df 80%, #daf6ea 100%); }
.fold { position: absolute; left: 4px; top: 9px; width: 27px; height: 27px; border-radius: 50%; background: #f0f0f0; box-shadow: 0 1px 4px rgba(0, 0, 0, .35); }
.shared .fold svg { width: 13px; height: 13px; }
.fields { display: grid; grid-template-columns: repeat(4, 1fr); column-gap: 15px; row-gap: 12px; }
.field label { display: block; height: 20px; line-height: 16px; font-size: 10px; font-weight: 500; color: #2e3a31; }
.control { position: relative; height: 27px; }
.control input, .control select { width: 100%; height: 27px; border: 1px solid #bfc4bc; border-radius: 4px; background: #fff; padding: 0 4px; appearance: none; font: 500 9px Inter, sans-serif; color: #2a2a2a; display: block; }
.shared .control .cal { position: absolute; right: 6px; top: 6px; width: 14px; height: 14px; color: #666; }
.caret::after { content: ""; position: absolute; right: 4px; top: 13px; border: 4px solid transparent; border-top-color: #6a6a6a; border-bottom: 0; }
.menu { position: absolute; left: 4px; top: 23px; width: 161px; height: 187px; display: flex; background: #fff; border-radius: 0 0 3px 3px; box-shadow: 0 2px 6px rgba(0, 0, 0, .4); z-index: 2; overflow: hidden; }
.menu ul { flex: 1; padding-top: 5px; }
.menu li { height: 33px; line-height: 33px; padding-left: 11px; font-size: 11px; color: #333; }
.menu .hot { background: #f3f3f3; }
.menu-bar, .r-scroll { width: 12px; flex: none; background: #f1f1f1; display: flex; flex-direction: column; align-items: center; padding: 4px 0; }
.menu-bar .thumb { width: 9px; height: 12px; margin-top: 4px; background: #c1c1c1; }
.up, .down { border: 3px solid transparent; }
.up { border-bottom-color: #999; border-top: 0; }
.down { border-top-color: #444; border-bottom: 0; margin-top: auto; }
.r-scroll .thumb { width: 9px; height: 340px; margin-top: 5px; background: #c0c0c0; }
.form h2 { font: 600 11px/16px Inter, sans-serif; color: #17231a; margin-top: 14px; }
.costs { width: 548px; max-width: 100%; height: 45px; margin-top: 4px; border: 1px solid #bfc4bc; border-radius: 3px; background: #f3f1f3; display: flex; align-items: center; justify-content: space-between; padding: 0 20px; }
.cost { display: flex; align-items: center; font: 500 10px Inter, sans-serif; }
.cost-name { font-size: 11px; margin-right: 8px; }
.costs label { display: flex; align-items: center; gap: 8px; margin-right: 7px; }
.costs label:last-child { margin-right: 0; }
.costs input { appearance: none; width: 14px; height: 14px; border: 1px solid #555; border-radius: 50%; margin: 0; }
.geo { display: block; font: 500 10px/14px Inter, sans-serif; color: #2b3a2f; margin-top: 4px; white-space: nowrap; }
.date { width: 161px; margin-top: 7px; }
.links { display: flex; gap: 16px; margin-top: 2px; }
.link { width: 103px; }
.link button { width: 103px; height: 21px; margin-top: 7px; border-radius: 3px; background: #c9c7c9; color: #000; font: 400 9px Roboto, sans-serif; gap: 6px; --cut: #c9c7c9; }
.link button.ready { background: #045a06; color: #fff; --cut: #045a06; box-shadow: 0 1px 2px rgba(0, 0, 0, .4); }
.shared .link svg { width: 12px; height: 12px; }
.copy { position: absolute; left: 229px; bottom: 3px; font-size: 8px; line-height: 12px; color: rgba(130, 135, 130, .8); white-space: nowrap; }
.shared .swoosh { position: absolute; width: 106px; height: 46px; right: 57px; bottom: 0; }
.shared .brand { position: absolute; width: 74px; height: 16px; right: 8px; bottom: 16px; overflow: visible; }
.brand-main { font: 500 13px Inter, sans-serif; fill: #c74f58; }
.brand-rise { font: italic 5px Inter, sans-serif; fill: #c74f58; }
.r-task { height: 27px; flex: none; background: #172830; display: flex; align-items: stretch; position: relative; color: #eee; }
.r-start { width: 33px; display: grid; place-items: center; }
.r-search { width: 196px; background: #f3f3f3; color: #444; display: flex; align-items: center; padding-left: 8px; gap: 9px; font-size: 9px; border-bottom: 1px solid #ccc; }
.r-apps { display: flex; margin-left: 3px; width: 334px; }
.r-apps span { flex: 1; display: grid; place-items: center; border-bottom: 2px solid #72b5e6; border-left: 3px solid #172830; border-right: 3px solid #172830; }
.r-apps .lit { background: #3c4b52; }
.shared .r-apps svg { width: 16px; height: 16px; }
.r-tray { margin-left: auto; display: flex; align-items: center; gap: 6px; padding-right: 18px; font-size: 8px; line-height: 12px; }
.shared .r-tray svg { width: 10px; height: 10px; }
.r-clock { text-align: center; margin: 0 5px 0 2px; white-space: nowrap; }
.shared .cursor { position: absolute; left: 427px; top: 19px; width: 10px; height: 14px; clip-path: inset(0 0 6px 0); }

/* Participants */
.panel { width: 320px; flex: none; border-left: 1px solid #dcdcdc; background: #f5f5f5; display: flex; flex-direction: column; }
.panel-head { height: 60px; display: flex; align-items: center; justify-content: space-between; padding: 3px 30px 0 20px; border-bottom: 1px solid #dcdcdc; flex: none; }
.panel-head h2 { font-size: 15px; font-weight: 700; }
.panel-body { flex: 1; display: flex; flex-direction: column; padding: 26px 20px 0; }
.invite { height: 32px; font-size: 13px; gap: 8px; }
.group { display: flex; align-items: center; margin: 12px 1px 9px -14px; font-size: 12px; color: #333; }
.tri { border: 4px solid transparent; border-top: 6px solid #444; border-bottom: 0; margin-right: 6px; }
.mute { margin-left: auto; }
.people li { height: 48px; display: flex; align-items: center; gap: 8px; padding: 0 1px; }
.avatar { width: 32px; height: 32px; border-radius: 50%; background: #919191; color: #fff; display: grid; place-items: center; font-weight: 600; font-size: 12px; }
.avatar.guest { background: #f3d6cf; color: #7a2a14; }
.avatar svg { stroke-width: 1.4; }
.who-text { flex: 1; display: flex; flex-direction: column; }
.p-name { font-size: 13px; line-height: 19px; color: #333; }
.p-name.strong { color: #242424; font-weight: 600; }
.p-role { font-size: 11px; line-height: 16px; color: #616161; }
.activate { margin: auto 0 39px 2px; color: #bdbdbd; }
.a1 { font-size: 19px; line-height: 26px; }
.a2 { font-size: 14px; line-height: 20px; }

/* Taskbar */
.taskbar { height: 48px; flex: none; background: #dededc; border-top: 1px solid #cfcfcf; display: grid; grid-template-columns: 1fr auto 1fr; align-items: center; }
.apps { display: flex; }
.apps button { width: 44px; height: 44px; position: relative; }
.apps svg { width: 24px; height: 24px; }
.apps .teams-6 { width: 28px; height: 28px; margin: -4px 0 0 4px; }
.open::after { content: ""; position: absolute; bottom: 2px; width: 6px; height: 3px; border-radius: 2px; background: #7b7b7b; }
.current::before { content: ""; position: absolute; inset: 3px; background: #efefed; border-radius: 4px; }
.current svg { position: relative; }
.current::after { width: 16px; background: #0a74d4; }
.tray { justify-self: end; display: flex; align-items: center; padding-right: 20px; font-size: 12px; line-height: 16px; }
.t-up { width: 14px; height: 14px; margin-right: 13px; }
.t-mic { color: #1552a8; margin-right: 17px; }
.lang { width: 26px; text-align: center; margin-right: 15px; }
.t-mon { width: 17px; height: 17px; margin-right: 7px; stroke-width: 1.5; }
.t-spk { width: 18px; height: 18px; margin-right: 14px; stroke-width: 1.5; }
.clock { text-align: right; margin-right: 8px; }
.badge { width: 16px; height: 16px; border-radius: 50%; background: #0a78d6; color: #fff; text-align: center; font-size: 10px; }
</style>
